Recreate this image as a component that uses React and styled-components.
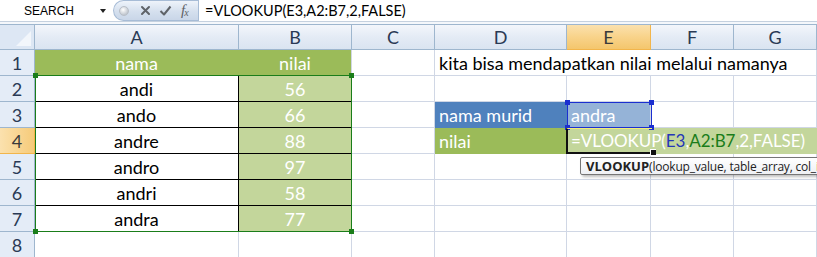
import React from "react";
import styled, { createGlobalStyle } from "styled-components";

const Global = createGlobalStyle`
  html, body { margin: 0; padding: 0; background: #fff; overflow: hidden; }
  body { width: 817px; height: 257px; }
`;

const Page = styled.div`
  width: 817px;
  height: 257px;
  overflow: hidden;
  display: flex;
  flex-direction: column;
  font-family: Lato, "Liberation Sans", sans-serif;
`;

const FormulaBar = styled.div`
  display: flex;
  height: 21px;
  background: #fff;
  flex: none;
`;

const NameBox = styled.div`
  width: 113px;
  box-sizing: border-box;
  display: flex;
  align-items: center;
  padding-left: 24px;
  font: 12px "Liberation Sans", Arial, sans-serif;
  color: #000;
  position: relative;
`;

const DropArrow = styled.span`
  position: absolute;
  left: 100px;
  top: 9px;
  width: 0;
  height: 0;
  border-left: 3.5px solid transparent;
  border-right: 3.5px solid transparent;
  border-top: 4px solid #222;
`;

const Pill = styled.div`
  width: 85px;
  box-sizing: border-box;
  display: flex;
  align-items: center;
  border-radius: 11px 0 0 11px;
  background: linear-gradient(#eef3fa, #d5e0ee 55%, #c9d6e8);
  border: 1px solid #a7bcd6;
  border-right: none;
  padding-left: 5px;
`;

const Dot = styled.span`
  width: 8px;
  height: 8px;
  flex: none;
  border-radius: 50%;
  background: radial-gradient(circle at 40% 35%, #fff, #c2c8d0 70%);
  border: 1px solid #b8bec7;
  margin-right: 6px;
`;

const IconBtn = styled.span`
  width: 20px;
  display: flex;
  justify-content: center;
  align-items: center;
`;

const Fx = styled.span`
  font: italic 15px "Liberation Serif", serif;
  color: #5f6165;
  margin-left: 6px;
  letter-spacing: -1px;
  sub { font-size: 10px; vertical-align: -1px; }
`;

const FormulaInput = styled.div`
  flex: 1;
  border-left: 1px solid #a7bcd6;
  display: flex;
  align-items: center;
  padding-left: 6px;
  font: 14.5px Lato, "Liberation Sans", sans-serif;
  color: #000;
`;

const Separator = styled.div`
  height: 4px;
  flex: none;
  border-top: 1px solid #c5d1df;
  border-bottom: 1px solid #9eb6ce;
  box-sizing: border-box;
  background: #f4f7fb;
`;

const GridWrap = styled.div`
  position: relative;
  display: grid;
  grid-template-columns: 35px 204px 113px 83px 132px 84px 83px 83px;
  grid-template-rows: 25px repeat(8, 26px);
`;

const Corner = styled.div`
  grid-column: 1;
  grid-row: 1;
  box-sizing: border-box;
  background: #dde7f4;
  border-right: 1px solid #9eb6ce;
  border-bottom: 1px solid #9eb6ce;
  position: relative;
  &::after {
    content: "";
    position: absolute;
    right: 3px;
    bottom: 3px;
    width: 0;
    height: 0;
    border-left: 15px solid transparent;
    border-bottom: 15px solid #f2f6fb;
  }
`;

const ColHead = styled.div`
  grid-column: ${(p) => p.$col};
  grid-row: 1;
  box-sizing: border-box;
  display: flex;
  align-items: center;
  justify-content: center;
  font-size: 18px;
  color: ${(p) => (p.$sel ? "#3b3b3b" : "#2a3a55")};
  background: ${(p) =>
    p.$sel
      ? "linear-gradient(#fbe1ae, #f8d38a 50%, #f4c66c)"
      : "linear-gradient(#f3f6fb, #e4ebf5 50%, #dae4f1)"};
  border-right: 1px solid ${(p) => (p.$sel ? "#f2b54b" : "#9eb6ce")};
  border-bottom: 1px solid ${(p) => (p.$sel ? "#f2b54b" : "#9eb6ce")};
`;

const RowHead = styled.div`
  grid-column: 1;
  grid-row: ${(p) => p.$row};
  box-sizing: border-box;
  display: flex;
  align-items: center;
  justify-content: center;
  font-size: 18px;
  color: ${(p) => (p.$sel ? "#3b3b3b" : "#2a3a55")};
  background: ${(p) =>
    p.$sel ? "linear-gradient(90deg, #fbe1ae, #f6cb7a)" : "#e4ecf7"};
  border-right: 1px solid ${(p) => (p.$sel ? "#f2b54b" : "#9eb6ce")};
  border-bottom: 1px solid ${(p) => (p.$sel ? "#f2b54b" : "#9eb6ce")};
`;

const Cell = styled.div`
  grid-column: ${(p) => p.$col} / span ${(p) => p.$span || 1};
  grid-row: ${(p) => p.$row};
  box-sizing: border-box;
  background: ${(p) => p.$bg || "#fff"};
  color: ${(p) => p.$fg || "#000"};
  border-right: 1px solid ${(p) => p.$br || "#d0d7e5"};
  border-bottom: 1px solid ${(p) => p.$bb || "#d0d7e5"};
  display: flex;
  align-items: center;
  justify-content: ${(p) => (p.$center ? "center" : "flex-start")};
  padding: 0 ${(p) => (p.$center ? 0 : 4)}px;
  font-size: ${(p) => (p.$edit ? 17 : 18)}px;
  letter-spacing: ${(p) => (p.$edit ? -0.05 : 0)}px;
  white-space: nowrap;
  overflow: hidden;
`;

const Ref = styled.span`
  color: ${(p) => p.$c};
`;

const RangeBox = styled.div`
  position: absolute;
  box-sizing: border-box;
  pointer-events: none;
  border: 1px solid ${(p) => p.$c};
`;

const Handle = styled.span`
  position: absolute;
  width: 5px;
  height: 5px;
  background: ${(p) => p.$c};
  left: ${(p) => (p.$r ? "auto" : "-3px")};
  right: ${(p) => (p.$r ? "-3px" : "auto")};
  top: ${(p) => (p.$b ? "auto" : "-3px")};
  bottom: ${(p) => (p.$b ? "-3px" : "auto")};
`;

const ActiveBox = styled.div`
  position: absolute;
  box-sizing: border-box;
  left: 566px;
  top: 103px;
  width: 86px;
  height: 26px;
  border-left: 2px solid #111;
  border-bottom: 2px solid #111;
  border-top: 1px solid #f3ee7a;
`;

const FillHandle = styled.span`
  position: absolute;
  right: -4px;
  bottom: -4px;
  width: 5px;
  height: 5px;
  background: #111;
  border: 1px solid #fff;
  border-right: none;
`;

const Tooltip = styled.div`
  position: absolute;
  left: 580px;
  top: 132px;
  height: 18px;
  width: 260px;
  box-sizing: border-box;
  border: 1px solid #767676;
  border-radius: 2px;
  background: linear-gradient(#ffffff, #eef0f4);
  box-shadow: 2px 2px 3px rgba(0, 0, 0, 0.25);
  display: flex;
  align-items: center;
  padding-left: 5px;
  font: 12px "Open Sans", "Liberation Sans", sans-serif;
  letter-spacing: -0.2px;
  color: #222;
  white-space: nowrap;
  b { font-weight: 700; font-size: 13px; letter-spacing: 0; }
`;

const cols = ["A", "B", "C", "D", "E", "F", "G"];
const data = [
  ["andi", 56],
  ["ando", 66],
  ["andre", 88],
  ["andro", 97],
  ["andri", 58],
  ["andra", 77],
];

const GREEN = "#9bbb59";
const LGREEN = "#c3d69b";

function Row({ r }) {
  const gr = r + 1;
  const cells = [];
  if (r === 1) {
    cells.push(
      <Cell key="a" $row={gr} $col={2} $bg={GREEN} $fg="#fff" $br={GREEN} $bb={GREEN} $center>
        nama
      </Cell>,
      <Cell key="b" $row={gr} $col={3} $bg={GREEN} $fg="#fff" $bb={GREEN} $center>
        nilai
      </Cell>,
      <Cell key="c" $row={gr} $col={4} />,
      <Cell key="d" $row={gr} $col={5} $span={4}>
        kita bisa mendapatkan nilai melalui namanya
      </Cell>
    );
    return cells;
  }
  if (r >= 2 && r <= 7) {
    const [n, v] = data[r - 2];
    cells.push(
      <Cell key="a" $row={gr} $col={2} $br="#000" $bb="#000" $center>
        {n}
      </Cell>,
      <Cell key="b" $row={gr} $col={3} $bg={LGREEN} $fg="#fff" $br="#d0d7e5" $bb="#000" $center>
        {v}
      </Cell>
    );
  } else {
    cells.push(<Cell key="a" $row={gr} $col={2} />, <Cell key="b" $row={gr} $col={3} />);
  }
  cells.push(<Cell key="c" $row={gr} $col={4} />);
  if (r === 3) {
    cells.push(
      <Cell key="d" $row={gr} $col={5} $bg="#4f81bd" $fg="#fff" $br="#4f81bd" $bb="#4f81bd">
        nama murid
      </Cell>,
      <Cell key="e" $row={gr} $col={6} $bg="#95b3d7" $fg="#fff" $bb="#95b3d7">
        andra
      </Cell>,
      <Cell key="f" $row={gr} $col={7} />,
      <Cell key="g" $row={gr} $col={8} />
    );
  } else if (r === 4) {
    cells.push(
      <Cell key="d" $row={gr} $col={5} $bg={GREEN} $fg="#fff" $br={GREEN} $bb={GREEN}>
        nilai
      </Cell>,
      <Cell key="e" $row={gr} $col={6} $span={3} $bg={LGREEN} $fg="#fff" $br={LGREEN} $bb={LGREEN} $edit>
        =VLOOKUP(<Ref $c="#2536b8">E3</Ref>,<Ref $c="#1a7d1a">A2:B7</Ref>,2,FALSE)
      </Cell>
    );
  } else {
    cells.push(
      <Cell key="d" $row={gr} $col={5} />,
      <Cell key="e" $row={gr} $col={6} />,
      <Cell key="f" $row={gr} $col={7} />,
      <Cell key="g" $row={gr} $col={8} />
    );
  }
  return cells;
}

export default function App() {
  return (
    <Page>
      <Global />
      <FormulaBar>
        <NameBox>
          SEARCH
          <DropArrow />
        </NameBox>
        <Pill>
          <Dot />
          <IconBtn>
            <svg width="11" height="11" viewBox="0 0 11 11">
              <path d="M2 2 L9 9 M9 2 L2 9" stroke="#5f6368" strokeWidth="2" strokeLinecap="round" />
            </svg>
          </IconBtn>
          <IconBtn>
            <svg width="13" height="11" viewBox="0 0 13 11">
              <path d="M1.5 6 L5 9.5 L11.5 1.5" stroke="#5f6368" strokeWidth="2" fill="none" strokeLinejoin="round" />
            </svg>
          </IconBtn>
          <Fx>
            f<sub>x</sub>
          </Fx>
        </Pill>
        <FormulaInput>=VLOOKUP(E3,A2:B7,2,FALSE)</FormulaInput>
      </FormulaBar>
      <Separator />
      <GridWrap>
        <Corner />
        {cols.map((c, i) => (
          <ColHead key={c} $col={i + 2} $sel={c === "E"}>
            {c}
          </ColHead>
        ))}
        {[1, 2, 3, 4, 5, 6, 7, 8].map((r) => (
          <React.Fragment key={r}>
            <RowHead $row={r + 1} $sel={r === 4}>
              {r}
            </RowHead>
            <Row r={r} />
          </React.Fragment>
        ))}
        <RangeBox $c="#1a7d1a" style={{ left: 35, top: 50, width: 317, height: 157 }}>
          <Handle $c="#1a7d1a" />
          <Handle $c="#1a7d1a" $r />
          <Handle $c="#1a7d1a" $b />
          <Handle $c="#1a7d1a" $r $b />
        </RangeBox>
        <RangeBox $c="#1b2fd0" style={{ left: 567, top: 77, width: 85, height: 26 }}>
          <Handle $c="#1b2fd0" />
          <Handle $c="#1b2fd0" $r />
          <Handle $c="#1b2fd0" $b />
          <Handle $c="#1b2fd0" $r $b />
        </RangeBox>
        <ActiveBox>
          <FillHandle />
        </ActiveBox>
        <Tooltip>
          <b>VLOOKUP</b>(lookup_value, table_array, col_index_num, [range_lookup])
        </Tooltip>
      </GridWrap>
    </Page>
  );
}
